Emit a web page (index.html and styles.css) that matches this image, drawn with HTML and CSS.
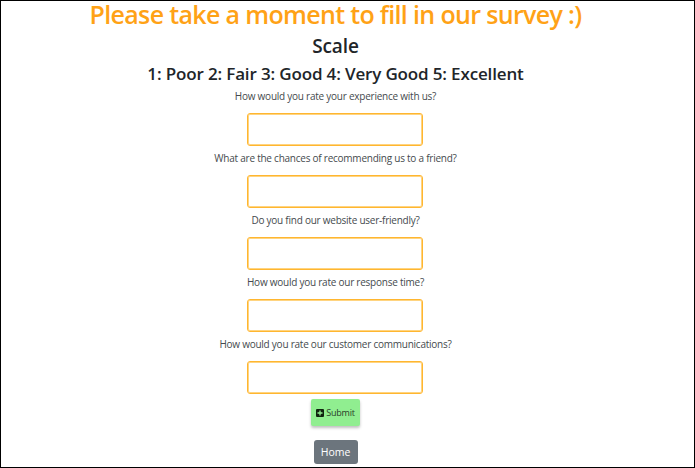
FILE: index.html
```html
<!DOCTYPE html>
<html lang="en">
<head>
<meta charset="utf-8">
<title>Survey</title>
<link rel="stylesheet" href="styles.css">
</head>
<body>
<main class="page">
  <h1 class="title">Please take a moment to fill in our survey :)</h1>
  <h2 class="scale">Scale</h2>
  <h3 class="legend">1: Poor 2: Fair 3: Good 4: Very Good 5: Excellent</h3>
  <form class="survey">
    <label class="question" for="q1">How would you rate your experience with us?</label>
    <input class="answer" id="q1" type="text">
    <label class="question" for="q2">What are the chances of recommending us to a friend?</label>
    <input class="answer" id="q2" type="text">
    <label class="question" for="q3">Do you find our website user-friendly?</label>
    <input class="answer" id="q3" type="text">
    <label class="question" for="q4">How would you rate our response time?</label>
    <input class="answer" id="q4" type="text">
    <label class="question" for="q5">How would you rate our customer communications?</label>
    <input class="answer" id="q5" type="text">
    <button class="submit" type="button">
      <svg class="icon" viewBox="0 0 16 16" aria-hidden="true"><path fill-rule="evenodd" d="M2 0h12a2 2 0 0 1 2 2v12a2 2 0 0 1-2 2H2a2 2 0 0 1-2-2V2a2 2 0 0 1 2-2zM6.700 3v3.700H3v2.600h3.700V13h2.600V9.300H13V6.700H9.300V3z"/></svg>
      <span>Submit</span>
    </button>
  </form>
  <a class="home">Home</a>
</main>
</body>
</html>
```
FILE: styles.css
```css
* { box-sizing: border-box; }
body {
  margin: 0;
  background: #fff;
  color: #212529;
  font-family: "Segoe UI", "Open Sans", "Noto Sans", sans-serif;
}
.page {
  height: 468px;
  border: 1px solid #000;
  padding-right: 24px;
  display: flex;
  flex-direction: column;
  align-items: center;
}
h1, h2, h3 { margin: 0; white-space: nowrap; }
.title {
  height: 30px;
  font-size: 25px;
  line-height: 26px;
  font-weight: 600;
  color: #ffa216;
  letter-spacing: -0.660px;
}
.scale {
  font-size: 19px;
  line-height: 24px;
  margin-top: 3px;
  font-weight: 600;
  letter-spacing: -0.100px;
}
.legend {
  font-size: 17px;
  line-height: 22px;
  margin-top: 5px;
  font-weight: 600;
  letter-spacing: -0.150px;
}
.survey {
  display: flex;
  flex-direction: column;
  align-items: center;
}
.question {
  height: 28px;
  padding-top: 3px;
  font-size: 10px;
  line-height: 17px;
  color: #454a4e;
  letter-spacing: -0.240px;
  white-space: nowrap;
}
.answer {
  width: 176px;
  height: 33px;
  margin-bottom: 1px;
  border: 1px solid #ffb62f;
  border-radius: 3px;
  background: #fff;
  box-shadow: inset 0 0 0 1px #ffd480;
  outline: none;
}
.submit {
  display: flex;
  align-items: center;
  justify-content: center;
  gap: 2px;
  width: 49px;
  height: 27px;
  margin-top: 4px;
  padding: 0;
  border: 0;
  border-radius: 2px;
  background: #90ee90;
  color: #294029;
  font: 9px/14px "Segoe UI", "Open Sans", "Noto Sans", sans-serif;
  letter-spacing: -0.200px;
  box-shadow: 0 2px 3px rgba(0, 0, 0, .25);
}
.icon { width: 8px; height: 8px; fill: #10230f; }
.home {
  width: 44px;
  height: 24px;
  margin-top: 14px;
  border-radius: 3px;
  background: #6c757d;
  color: #fff;
  font-size: 10.500px;
  line-height: 25px;
  text-align: center;
}
```
